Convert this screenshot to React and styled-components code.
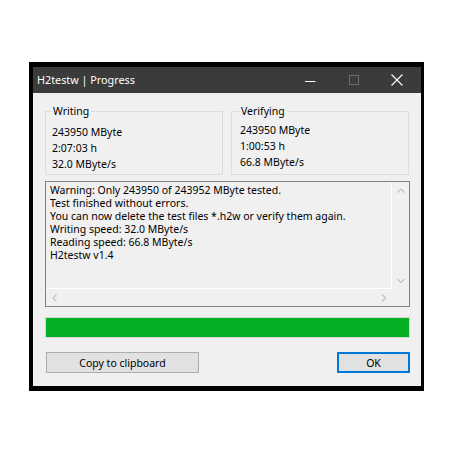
import React from 'react';
import styled, { createGlobalStyle } from 'styled-components';

const Global = createGlobalStyle`
  html, body { margin: 0; padding: 0; background: #fff; }
  body { font-family: "Noto Sans", "Open Sans", sans-serif; color: #000; }
`;

const Page = styled.div`
  width: 452px;
  height: 452px;
  box-sizing: border-box;
  padding: 62px 0 0 29px;
`;

const Frame = styled.div`
  width: 395px;
  box-sizing: border-box;
  background: #000;
  padding: 5px 3px 5px 4px;
`;

const Window = styled.div`
  display: flex;
  flex-direction: column;
`;

const TitleBar = styled.div`
  height: 26px;
  background: #3b3b3b;
  display: flex;
  align-items: center;
  padding: 0 3px 0 4px;
`;

const Title = styled.div`
  flex: 1;
  color: #fff;
  font-size: 10.8px;
  line-height: 16px;
`;

const CtrlButton = styled.div`
  width: 43px;
  height: 26px;
  display: flex;
  align-items: center;
  justify-content: center;
`;

const Client = styled.div`
  height: 293px;
  box-sizing: border-box;
  background: #f0f0f0;
  padding: 10px 11px 0 12px;
  display: flex;
  flex-direction: column;
  font-size: 10.5px;
`;

const Groups = styled.div`
  display: grid;
  grid-template-columns: 178px 178px;
  column-gap: 8px;
`;

const Group = styled.fieldset`
  margin: 0;
  min-width: 0;
  padding: 0 0 2px ${p => p.$inset}px;
  border: 1px solid #dcdcdc;
  font-size: 10.5px;
  line-height: 16px;
`;

const Legend = styled.legend`
  padding: 0 2px;
  margin-left: -1px;
  font-size: 10.5px;
  line-height: 16px;
`;

const Values = styled.div`
  padding-top: ${p => p.$top}px;
  display: flex;
  flex-direction: column;
`;

const TextBox = styled.div`
  margin-top: 6px;
  height: 126px;
  box-sizing: border-box;
  border: 1px solid #828282;
  display: grid;
  grid-template-columns: 1fr 17px;
  grid-template-rows: 1fr 17px;
`;

const TextArea = styled.div`
  border-right: 1px solid #fff;
  border-bottom: 1px solid #fff;
  padding: 2px 4px;
  font-size: 10.5px;
  line-height: 13px;
  white-space: pre;
  overflow: hidden;
`;

const VScroll = styled.div`
  display: flex;
  flex-direction: column;
  justify-content: space-between;
`;

const HScroll = styled.div`
  display: flex;
  justify-content: space-between;
`;

const Arrow = styled.div`
  width: 17px;
  height: 17px;
  display: flex;
  align-items: center;
  justify-content: center;
`;

const Progress = styled.div`
  margin-top: 10px;
  height: 21px;
  box-sizing: border-box;
  border: 1px solid #d6d6d6;
  background: #e6e6e6;
  display: flex;
`;

const Fill = styled.div`
  background: #06b025;
  height: 100%;
`;

const ButtonRow = styled.div`
  margin-top: 14px;
  display: flex;
  justify-content: space-between;
  padding-left: 1px;
`;

const Button = styled.button`
  width: ${p => p.$w}px;
  height: 21px;
  box-sizing: border-box;
  background: #e1e1e1;
  border: ${p => (p.$default ? '2px solid #0078d7' : '1px solid #adadad')};
  font-family: "Noto Sans", "Open Sans", sans-serif;
  font-size: 10.5px;
  line-height: 16px;
  color: #000;
  padding: 0;
  display: flex;
  align-items: center;
  justify-content: center;
`;

const Chevron = ({ dir }) => {
  const paths = {
    up: 'M0.5 4.5 L4 1 L7.5 4.5',
    down: 'M0.5 1 L4 4.5 L7.5 1',
    left: 'M4.5 0.5 L1 4 L4.5 7.5',
    right: 'M1 0.5 L4.5 4 L1 7.5',
  };
  const vertical = dir === 'up' || dir === 'down';
  return (
    <svg width={vertical ? 8 : 6} height={vertical ? 6 : 8} viewBox={vertical ? '0 0 8 6' : '0 0 6 8'}>
      <path d={paths[dir]} fill="none" stroke="#c2c2c2" strokeWidth="1.2" />
    </svg>
  );
};

const log = `Warning: Only 243950 of 243952 MByte tested.
Test finished without errors.
You can now delete the test files *.h2w or verify them again.
Writing speed: 32.0 MByte/s
Reading speed: 66.8 MByte/s
H2testw v1.4`;

export default function App() {
  return (
    <>
      <Global />
      <Page>
        <Frame>
          <Window>
            <TitleBar>
              <Title>H2testw | Progress</Title>
              <CtrlButton>
                <svg width="11" height="11" viewBox="0 0 11 11">
                  <path d="M0 6.5 H10.5" stroke="#fff" strokeWidth="1" />
                </svg>
              </CtrlButton>
              <CtrlButton>
                <svg width="10" height="10" viewBox="0 0 10 10">
                  <rect x="0.5" y="0.5" width="9" height="9" fill="none" stroke="#6e6e6e" strokeWidth="1" />
                </svg>
              </CtrlButton>
              <CtrlButton>
                <svg width="12" height="12" viewBox="0 0 12 12">
                  <path d="M0.5 0.5 L11.5 11.5 M11.5 0.5 L0.5 11.5" stroke="#fff" strokeWidth="1.1" />
                </svg>
              </CtrlButton>
            </TitleBar>
            <Client>
              <Groups>
                <Group $inset={6}>
                  <Legend>Writing</Legend>
                  <Values $top={5}>
                    <span>243950 MByte</span>
                    <span>2:07:03 h</span>
                    <span>32.0 MByte/s</span>
                  </Values>
                </Group>
                <Group $inset={8}>
                  <Legend>Verifying</Legend>
                  <Values $top={3}>
                    <span>243950 MByte</span>
                    <span>1:00:53 h</span>
                    <span>66.8 MByte/s</span>
                  </Values>
                </Group>
              </Groups>
              <TextBox>
                <TextArea>{log}</TextArea>
                <VScroll>
                  <Arrow><Chevron dir="up" /></Arrow>
                  <Arrow><Chevron dir="down" /></Arrow>
                </VScroll>
                <HScroll>
                  <Arrow><Chevron dir="left" /></Arrow>
                  <Arrow><Chevron dir="right" /></Arrow>
                </HScroll>
                <div />
              </TextBox>
              <Progress>
                <Fill style={{ width: '100%' }} />
              </Progress>
              <ButtonRow>
                <Button $w={153}>Copy to clipboard</Button>
                <Button $w={73} $default>OK</Button>
              </ButtonRow>
            </Client>
          </Window>
        </Frame>
      </Page>
    </>
  );
}
